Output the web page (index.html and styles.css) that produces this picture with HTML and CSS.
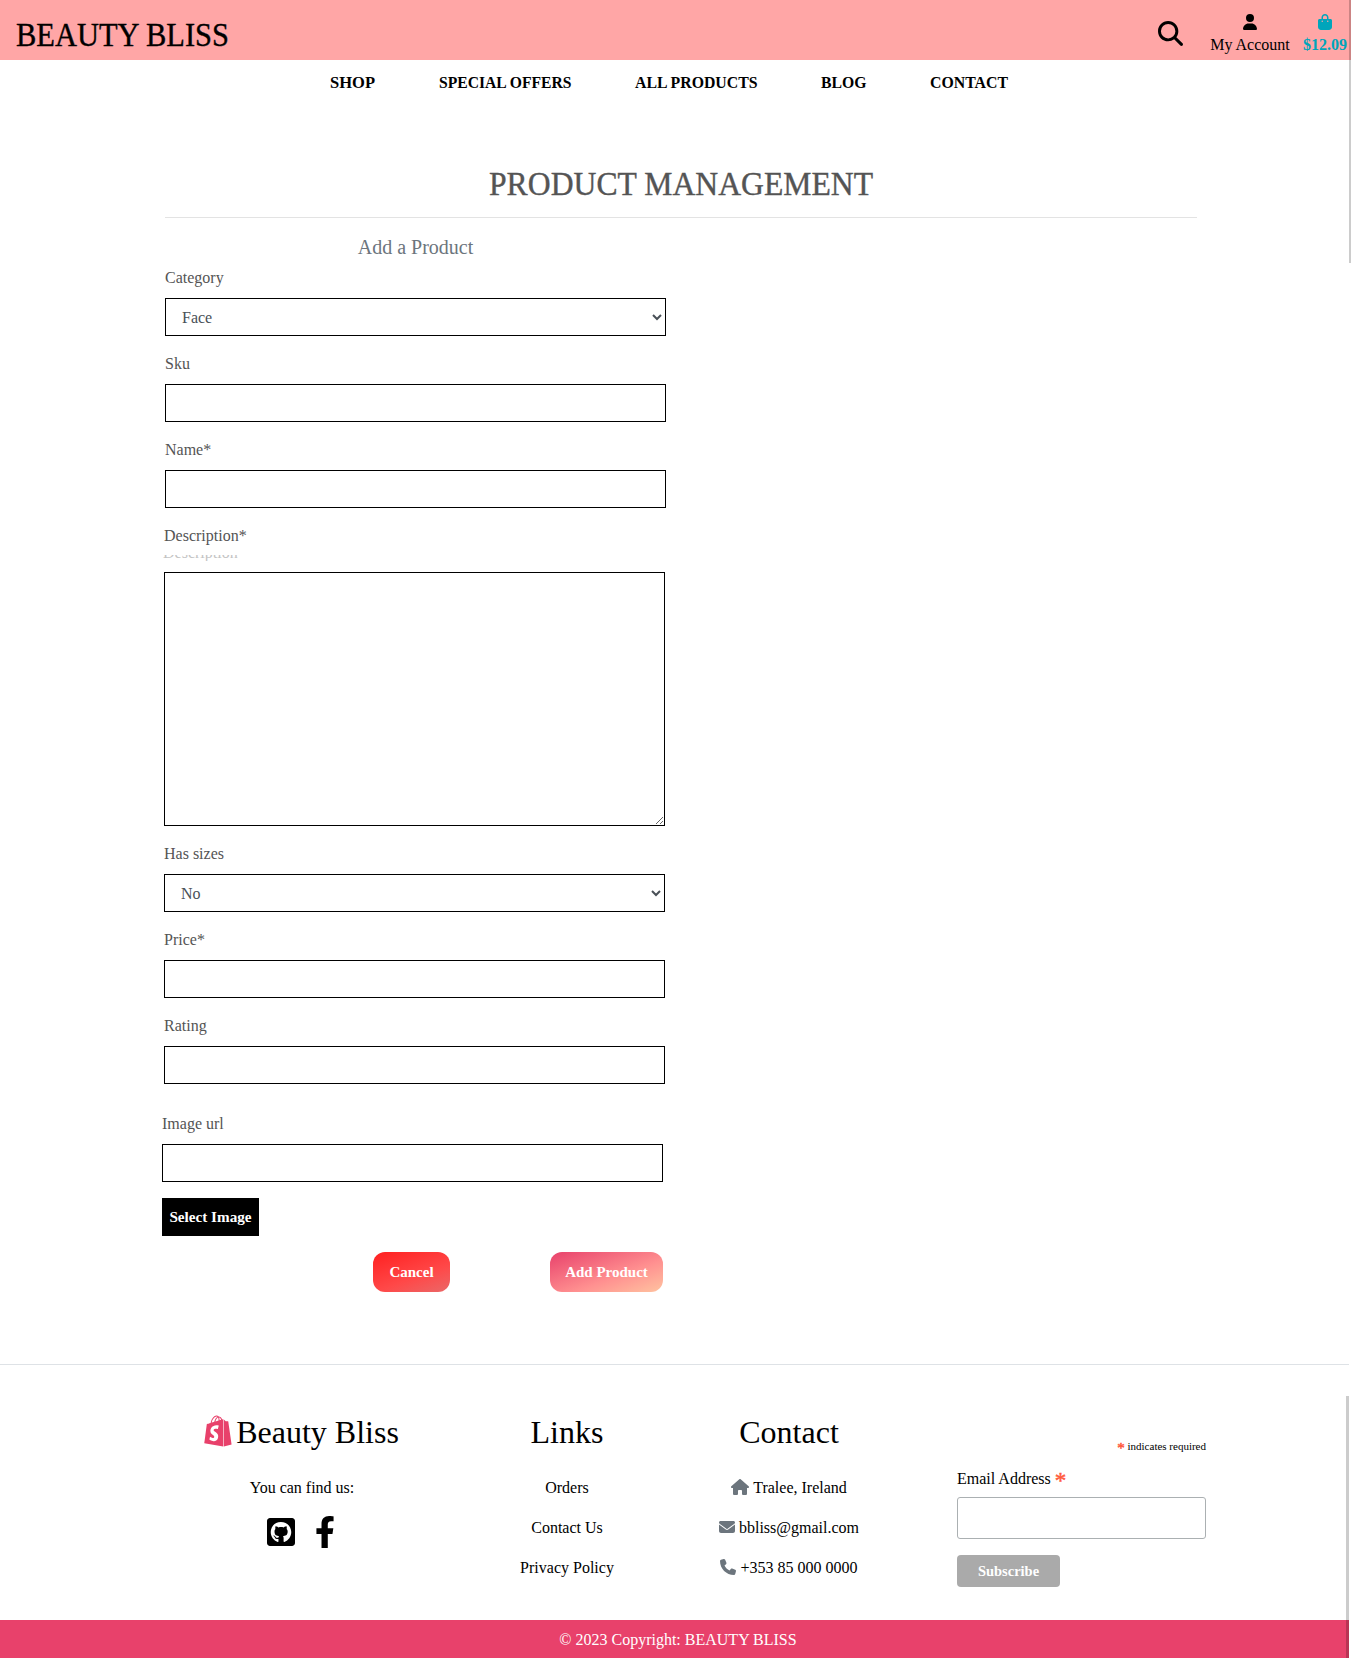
FILE: index.html
```html
<!DOCTYPE html>
<html lang="en">
<head>
<meta charset="utf-8">
<title>Beauty Bliss</title>
<link rel="stylesheet" href="styles.css">
</head>
<body>
<div class="page">
  <header class="header">
    <a class="brand"><svg width="214" height="60"><text x="0" y="46" textLength="213" lengthAdjust="spacingAndGlyphs">BEAUTY BLISS</text></svg></a>
    <div class="tools">
      <svg class="search" viewBox="0 0 512 512"><path d="M416 208c0 45.900-14.900 88.300-40 122.700L502.600 457.400c12.500 12.500 12.500 32.800 0 45.300s-32.800 12.500-45.300 0L330.700 376c-34.400 25.200-76.800 40-122.700 40C93.100 416 0 322.900 0 208S93.100 0 208 0S416 93.100 416 208zM208 356a148 148 0 1 0 0-296 148 148 0 1 0 0 296z"/></svg>
      <a class="tool account">
        <svg viewBox="0 0 448 512"><path d="M224 256A128 128 0 1 0 224 0a128 128 0 1 0 0 256zm-45.700 48C79.800 304 0 383.800 0 482.300C0 498.700 13.300 512 29.700 512H418.300c16.400 0 29.700-13.300 29.700-29.700C448 383.800 368.200 304 269.700 304H178.300z"/></svg>
        <span>My Account</span>
      </a>
      <a class="tool bag">
        <svg viewBox="0 0 448 512"><path d="M160 112c0-35.300 28.700-64 64-64s64 28.700 64 64v48H160V112zm-48 48H48c-26.500 0-48 21.500-48 48V416c0 53 43 96 96 96H352c53 0 96-43 96-96V208c0-26.500-21.500-48-48-48H336V112C336 50.100 285.900 0 224 0S112 50.100 112 112v48zm24 48a24 24 0 1 1 0 48 24 24 0 1 1 0-48zm152 24a24 24 0 1 1 48 0 24 24 0 1 1 -48 0z"/></svg>
        <span>$12.09</span>
      </a>
    </div>
  </header>

  <nav class="nav">
    <a><svg width="45" height="40"><text x="0" y="28" textLength="45" lengthAdjust="spacingAndGlyphs">SHOP</text></svg></a>
    <a><svg width="132" height="40"><text x="0" y="28" textLength="132.500" lengthAdjust="spacingAndGlyphs">SPECIAL OFFERS</text></svg></a>
    <a><svg width="122" height="40"><text x="0" y="28" textLength="122.500" lengthAdjust="spacingAndGlyphs">ALL PRODUCTS</text></svg></a>
    <a><svg width="45" height="40"><text x="0" y="28" textLength="45.500" lengthAdjust="spacingAndGlyphs">BLOG</text></svg></a>
    <a><svg width="78" height="40"><text x="0" y="28" textLength="78" lengthAdjust="spacingAndGlyphs">CONTACT</text></svg></a>
  </nav>

  <main class="main">
    <h2 class="title"><svg width="385" height="48"><text x="0" y="35" textLength="384" lengthAdjust="spacingAndGlyphs">PRODUCT MANAGEMENT</text></svg></h2>
    <form class="form">
      <h5 class="subtitle">Add a Product</h5>
      <div class="group"><label>Category</label><select class="control"><option>Face</option></select></div>
      <div class="group"><label>Sku</label><input class="control" type="text"></div>
      <div class="group"><label>Name*</label><input class="control" type="text"></div>
      <div class="shift">
        <div class="group"><label>Description*</label><div class="ghost"><span>Description</span></div><textarea class="control area"></textarea></div>
        <div class="group"><label>Has sizes</label><select class="control"><option>No</option></select></div>
        <div class="group"><label>Price*</label><input class="control" type="text"></div>
        <div class="group"><label>Rating</label><input class="control" type="text"></div>
      </div>
      <div class="upload">
        <div class="group"><label>Image url</label><input class="control" type="text"></div>
        <button class="select-image" type="button">Select Image</button>
        <div class="actions">
          <a class="btn cancel">Cancel</a>
          <button class="btn add" type="button">Add Product</button>
        </div>
      </div>
    </form>
  </main>

  <footer class="footer">
    <div class="columns">
      <section class="col about">
        <h2><svg class="shopify" viewBox="0 0 448 512"><path d="M388.320,104.100a4.660,4.660,0,0,0-4.400-4c-2,0-37.230-.8-37.230-.8s-21.610-20.820-29.620-28.830V503.200L442.760,472S388.720,106.500,388.320,104.100ZM288.650,70.470a116.670,116.670,0,0,0-7.210-17.610C271,32.850,255.420,22,237,22a15,15,0,0,0-4,.4c-.4-.8-1.200-1.200-1.600-2C223.400,11.630,213,7.630,200.580,8c-24,.8-48,18-67.250,48.830-13.610,21.620-24,48.840-26.820,70.060-27.620,8.400-46.830,14.410-47.230,14.810-14,4.400-14.410,4.800-16,18-1.200,10-38,291.820-38,291.820L307.860,504V65.670a41.660,41.660,0,0,0-4.400.4S297.860,67.670,288.650,70.470ZM233.410,87.690c-16,4.800-33.630,10.400-50.840,15.610,4.800-18.820,14.410-37.630,25.620-50,4.400-4.400,10.410-9.610,17.210-12.810C232.210,54.860,233.810,74.480,233.410,87.690ZM200.580,24.440A27.490,27.490,0,0,1,215,28c-6.400,3.200-12.810,8.410-18.810,14.410-15.210,16.420-26.820,42-31.620,66.450-14.420,4.410-28.830,8.810-42,12.810C131.330,83.280,163.750,25.240,200.580,24.440ZM154.150,244.610c1.600,25.610,69.250,31.220,73.250,91.660,2.800,47.640-25.220,80.060-65.650,82.470-48.830,3.200-75.650-25.620-75.650-25.620l10.400-44s26.820,20.420,48.440,18.820c14-.8,19.220-12.410,18.810-20.420-2-33.620-57.240-31.620-60.840-86.860-3.200-46.440,27.220-93.270,94.470-97.680,26-1.600,39.230,4.810,39.230,4.810L221.400,225.390s-17.210-8-37.630-6.400C154.150,221,153.750,239.800,154.150,244.610ZM249.420,82.880c0-12-1.600-29.220-7.210-43.630,18.420,3.600,27.220,24,31.230,36.430Q262.630,78.680,249.420,82.880Z"/></svg>Beauty Bliss</h2>
        <p>You can find us:</p>
        <div class="social">
          <svg class="github" viewBox="0 0 448 512"><path d="M400 32H48C21.500 32 0 53.500 0 80v352c0 26.500 21.500 48 48 48h352c26.500 0 48-21.500 48-48V80c0-26.500-21.500-48-48-48zM277.300 415.700c-8.400 1.500-11.500-3.700-11.500-8 0-5.400.2-33 .2-55.300 0-15.600-5.200-25.500-11.300-30.700 37-4.100 76-9.200 76-73.100 0-18.200-6.500-27.300-17.100-39 1.700-4.300 7.400-22-1.700-45-13.900-4.300-45.700 17.900-45.700 17.900-13.200-3.700-27.500-5.600-41.600-5.600-14.100 0-28.400 1.900-41.600 5.600 0 0-31.800-22.200-45.700-17.900-9.100 22.900-3.500 40.600-1.700 45-10.600 11.700-15.600 20.800-15.600 39 0 63.600 37.300 69 74.300 73.100-4.800 4.300-9.100 11.700-10.600 22.300-9.500 4.300-33.800 11.700-48.300-13.900-9.100-15.800-25.500-17.100-25.500-17.100-16.200-.2-1.100 10.200-1.100 10.200 10.800 5 18.400 24.200 18.400 24.200 9.700 29.700 56.100 19.700 56.100 19.700 0 13.900.2 36.500.2 40.600 0 4.300-3 9.500-11.500 8-66-22.100-112.200-84.900-112.200-158.300 0-91.800 70.200-161.500 162-161.500S388 165.600 388 257.400c.1 73.400-44.700 136.300-110.700 158.300z"/></svg>
          <svg class="facebook" viewBox="0 0 320 512"><path d="M279.140 288l14.220-92.660h-88.910v-60.130c0-25.350 12.420-50.060 52.240-50.060h40.420V6.260S260.430 0 225.360 0c-73.220 0-121.080 44.380-121.080 124.720v70.620H22.890V288h81.390v224h100.170V288z"/></svg>
        </div>
      </section>
      <section class="col links">
        <h2>Links</h2>
        <p>Orders</p>
        <p>Contact Us</p>
        <p>Privacy Policy</p>
      </section>
      <section class="col contact">
        <h2>Contact</h2>
        <p><svg width="18" height="16" viewBox="0 0 576 512"><path d="M575.800 255.500c0 18-15 32.100-32 32.100h-32l.7 160.200c0 2.700-.2 5.400-.5 8.100V472c0 22.100-17.900 40-40 40H456c-1.100 0-2.200 0-3.300-.1c-1.400 .1-2.800 .1-4.200 .1H416 392c-22.100 0-40-17.900-40-40V448 384c0-17.700-14.300-32-32-32H256c-17.700 0-32 14.300-32 32v64 24c0 22.100-17.900 40-40 40H160 128.100c-1.500 0-3-.1-4.500-.2c-1.200 .1-2.400 .2-3.600 .2H104c-22.100 0-40-17.900-40-40V360c0-.9 0-1.900 .1-2.800V287.600H32c-18 0-32-14-32-32.100c0-9 3-17 10-24L266.400 8c7-7 15-8 22-8s15 2 21 7L564.800 231.500c8 7 12 15 11 24z"/></svg> Tralee, Ireland</p>
        <p><svg width="16" height="16" viewBox="0 0 512 512"><path d="M48 64C21.500 64 0 85.500 0 112c0 15.100 7.100 29.300 19.200 38.400L236.800 313.600c11.400 8.500 27 8.500 38.400 0L492.800 150.400c12.100-9.100 19.200-23.300 19.200-38.400c0-26.500-21.500-48-48-48H48zM0 176V384c0 35.300 28.700 64 64 64H448c35.300 0 64-28.700 64-64V176L294.400 339.200c-22.800 17.100-54 17.100-76.800 0L0 176z"/></svg> bbliss@gmail.com</p>
        <p><svg width="16" height="16" viewBox="0 0 512 512"><path d="M164.900 24.600c-7.700-18.600-28-28.500-47.400-23.200l-88 24C12.100 30.200 0 46 0 64C0 311.400 200.600 512 448 512c18 0 33.800-12.100 38.600-29.500l24-88c5.300-19.400-4.600-39.700-23.200-47.400l-96-40c-16.300-6.800-35.200-2.100-46.300 11.600L304.700 368C234.300 334.700 177.300 277.700 144 207.300L193.300 167c13.700-11.200 18.400-30 11.600-46.300l-40-96z"/></svg> +353 85 000 0000</p>
      </section>
      <section class="newsletter">
        <div class="required"><span class="star">*</span> indicates required</div>
        <label class="email-label">Email Address <span class="star">*</span></label>
        <input class="email" type="email">
        <button class="subscribe" type="button">Subscribe</button>
      </section>
    </div>
    <div class="copyright">© 2023 Copyright: BEAUTY BLISS</div>
    <div class="bar-bottom"></div>
  </footer>
  <div class="bar-top"></div>
</div>
</body>
</html>
```

FILE: styles.css
```css
* { box-sizing: border-box; }

body {
  margin: 0;
  background: #fff;
  color: #000;
  font: 16px/24px "Liberation Serif", "Times New Roman", serif;
}

h2, h5, p { margin: 0; font-weight: 400; }
svg { display: block; overflow: visible; }
input, select, textarea, button { font: inherit; }

.page { position: relative; width: 1351px; height: 1661px; }

/* Header */
.header {
  display: flex;
  justify-content: space-between;
  height: 60px;
  padding: 0 4px 0 16px;
  background: #ffa6a6;
}
.brand text { font-size: 34.5px; stroke: #000; stroke-width: .4px; }
.tools { display: flex; align-items: flex-start; }
.search { width: 25px; height: 25px; margin: 21px 27px 0 0; }
.tool { display: flex; flex-direction: column; align-items: center; padding-top: 14px; }
.tool svg { width: 14px; height: 16px; margin-bottom: 3px; }
.account { width: 80px; margin-right: 13px; white-space: nowrap; }
.bag { width: 44px; color: #00a5bb; font-weight: 700; }
.bag svg { fill: currentColor; }

.nav { display: flex; gap: 64px; height: 40px; padding-left: 330px; }
.nav text { font-size: 17.5px; font-weight: 700; }

/* Product form */
.main { width: 1032px; height: 1264px; margin-left: 165px; padding-top: 60px; }
.title { display: flex; justify-content: center; height: 58px; border-bottom: 1px solid #e3e3e3; }
.title text { font-size: 34.5px; fill: #545454; stroke: #545454; stroke-width: .4px; }
.form { width: 501px; padding-top: 17px; color: #545454; }
.subtitle { margin-bottom: 7px; text-align: center; font-size: 20px; color: #6c757d; }
.group { margin-bottom: 16px; }
.group label { display: block; height: 24px; margin-bottom: 8px; }
.control {
  display: block;
  width: 501px;
  height: 38px;
  padding: 6px 12px;
  border: 1px solid #000;
  border-radius: 0;
  background: #fff;
  color: #495057;
}
.shift { margin-left: -1px; }
.ghost { height: 6px; margin: -1px 0 11px -1px; overflow: hidden; color: #c4c4c4; }
.ghost span { display: block; margin-top: -14px; }
.area { height: 254px; resize: vertical; }
.upload { margin: 28px 0 0 -3px; }
.select-image {
  display: block;
  width: 97px;
  height: 38px;
  padding: 0;
  border: 0;
  background: #000;
  color: #fff;
  font-weight: 700;
  font-size: 15.2px;
}
.actions { display: flex; justify-content: flex-end; gap: 100px; width: 501px; margin-top: 16px; }
.btn {
  height: 40px;
  padding: 8px 0;
  border: 0;
  border-radius: 12px;
  color: #fff;
  text-align: center;
  font-size: 15px;
  font-weight: 700;
}
.cancel { width: 77px; background: linear-gradient(160deg, #ff2020, #ff4848 60%, #ea6868); }
.add { width: 113px; background: linear-gradient(160deg, #e8416b, #ff9090 60%, #ffc3a0); }

/* Footer */
.footer { position: relative; width: 1349px; height: 294px; border-top: 1px solid #dee2e6; }
.columns { display: flex; height: 255px; }
.col { padding-top: 48px; text-align: center; white-space: nowrap; }
.col h2 { display: flex; justify-content: center; height: 38px; margin-bottom: 25px; font-size: 32px; line-height: 38px; }
.col p { display: flex; justify-content: center; gap: 4px; height: 24px; margin-bottom: 16px; }
.col p svg { margin-top: 3px; fill: #6c757d; }
.about { width: 200px; margin-left: 202px; }
.shopify { width: 28px; height: 32px; margin: 2px 4px 0 0; fill: #e8416b; }
.about h2 { padding-right: 1px; }
.social { display: flex; justify-content: center; gap: 20px; padding-right: 2px; }
.github { width: 28px; height: 32px; }
.facebook { width: 20px; height: 32px; }
.links { width: 120px; margin-left: 105px; }
.contact { width: 180px; margin-left: 72px; }
.newsletter { width: 249px; margin-left: 78px; padding-top: 69px; }
.required { height: 24px; text-align: right; font-size: 11px; }
.star { position: relative; color: #ff5a3c; line-height: 0; -webkit-text-stroke: .5px #ff5a3c; }
.required .star { top: 3px; font-size: 15px; }
.email-label { display: block; height: 39px; padding-top: 9px; }
.email-label .star { top: 4px; font-size: 23px; }
.email { display: block; width: 249px; height: 42px; border: 1px solid #abb0b2; border-radius: 3px; background: #fff; }
.subscribe {
  display: block;
  width: 103px;
  height: 32px;
  margin-top: 16px;
  padding: 0;
  border: 0;
  border-radius: 4px;
  background: #aaa;
  color: #fff;
  font-size: 14.5px;
  font-weight: 700;
}
.copyright { height: 38px; padding: 8px 0 6px 7px; background: #e8416b; color: #fff; text-align: center; }

/* Scroll indicators over the right edge */
.bar-top { position: absolute; top: 0; right: 0; width: 2px; height: 263px; background: rgba(0, 0, 0, .2); }
.bar-bottom { position: absolute; top: 31px; right: 0; width: 3px; height: 262px; background: rgba(0, 0, 0, .2); }
```
